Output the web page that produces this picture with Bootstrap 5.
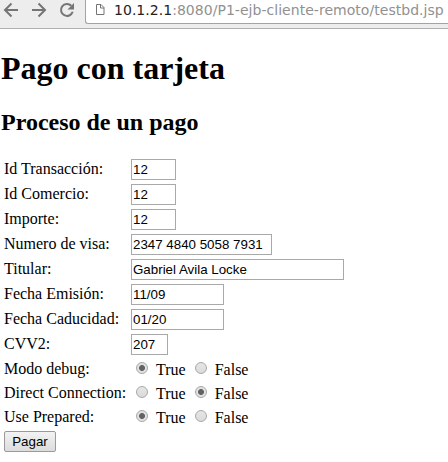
<!DOCTYPE html>
<html lang="es">
<head>
<meta charset="utf-8">
<meta name="viewport" content="width=device-width, initial-scale=1">
<title>Pago con tarjeta</title>
<link href="https://cdn.jsdelivr.net/npm/bootstrap@5.3.0/dist/css/bootstrap.min.css" rel="stylesheet">
<style>
body{font-family:"Liberation Serif",serif;font-size:16px;line-height:18px;color:#000;background:#fff;overflow:hidden}
.toolbar{height:29px;background:#ededed;border-bottom:1px solid #b0b0b0}
.toolbar svg{display:block;flex:none}
.nav-icons{width:85px;height:20px}
.address{height:24px;background:#fff;border:1px solid #a3a3a3;border-width:0 0 1px 1px;border-radius:0 0 0 3px;font:14px/21px "DejaVu Sans",sans-serif;letter-spacing:.035px;color:#919191;padding-left:9px;white-space:nowrap}
.address b{font-weight:400;color:#222}
.title-main{font-size:32px;line-height:36px;font-weight:700;margin:21px 0 0 1px}
.title-sub{font-size:24px;line-height:28px;font-weight:700;margin:22px 0 0 1px}
.pay-form{margin:21px 0 0 4px}
.line{height:25px;padding-top:2px}
.line-radio{height:24px;padding-top:2px}
.caption{width:127px;flex:none;line-height:20px}
.line-radio .caption{line-height:19px}
.box{height:21px;border:1px solid #a9a9a9;border-radius:0;padding:1px 1px;background:#fff;color:#000;font:13.33px/17px "Liberation Sans",sans-serif;outline:0}
.w-a{width:45px}.w-b{width:141px}.w-c{width:213px}.w-d{width:93px}.w-e{width:37px}
.choice{width:58.7px;line-height:21px}
.choice input{appearance:none;width:12px;height:12px;margin:3px 8px 0 5px;border:1px solid #a8a8a8;border-radius:50%;background:linear-gradient(#e6e6e6,#dadada);flex:none}
.choice input:checked{background:radial-gradient(circle at center,#636363 0 2.6px,#e2e2e2 3.3px)}
.pay{width:52px;height:21px;padding:0;border:1px solid #9a9a9a;border-radius:2px;background:linear-gradient(#f3f3f3,#dcdcdc);font:13.33px/19px "Liberation Sans",sans-serif;color:#000;margin-top:2px}
</style>
<script src="https://cdn.jsdelivr.net/npm/bootstrap@5.3.0/dist/js/bootstrap.bundle.min.js"></script>
</head>
<body>
<header class="toolbar d-flex align-items-start">
  <svg class="nav-icons" viewBox="0 0 85 20" fill="none" stroke="#757575" stroke-width="2">
    <path d="M18 10H5.500M11.500 3.500 5 10l6.500 6.500"/>
    <path d="M32 10h12.500M38.500 3.500 45 10l-6.500 6.500"/>
    <path d="M71.300 5.700A6 6 0 1 0 72.700 11.800"/>
    <path d="M74 3v6.500h-6.500z" fill="#757575" stroke="none"/>
  </svg>
  <div class="address d-flex flex-grow-1">
    <svg width="19" height="20" viewBox="0 0 19 20" fill="none" stroke="#757575"><path d="M1.500 4.500h4.500l3 3v7h-7.500zM5.500 4.500v3.500h3.500"/></svg>
    <span><b>10.1.2.1</b>:8080/P1-ejb-cliente-remoto/testbd.jsp</span>
  </div>
</header>
<main>
  <h1 class="title-main">Pago con tarjeta</h1>
  <h2 class="title-sub mb-0">Proceso de un pago</h2>
  <form class="pay-form">
    <div class="line d-flex"><label class="caption" for="tx">Id Transacción:</label><input id="tx" class="box w-a" value="12"></div>
    <div class="line d-flex"><label class="caption" for="co">Id Comercio:</label><input id="co" class="box w-a" value="12"></div>
    <div class="line d-flex"><label class="caption" for="im">Importe:</label><input id="im" class="box w-a" value="12"></div>
    <div class="line d-flex"><label class="caption" for="vi">Numero de visa:</label><input id="vi" class="box w-b" value="2347 4840 5058 7931"></div>
    <div class="line d-flex"><label class="caption" for="ti">Titular:</label><input id="ti" class="box w-c" value="Gabriel Avila Locke"></div>
    <div class="line d-flex"><label class="caption" for="em">Fecha Emisión:</label><input id="em" class="box w-d" value="11/09"></div>
    <div class="line d-flex"><label class="caption" for="ca">Fecha Caducidad:</label><input id="ca" class="box w-d" value="01/20"></div>
    <div class="line d-flex"><label class="caption" for="cv">CVV2:</label><input id="cv" class="box w-e" value="207"></div>
    <div class="line-radio d-flex"><span class="caption">Modo debug:</span><label class="choice d-flex"><input type="radio" name="debug" checked>True</label><label class="choice d-flex"><input type="radio" name="debug">False</label></div>
    <div class="line-radio d-flex"><span class="caption">Direct Connection:</span><label class="choice d-flex"><input type="radio" name="direct">True</label><label class="choice d-flex"><input type="radio" name="direct" checked>False</label></div>
    <div class="line-radio d-flex"><span class="caption">Use Prepared:</span><label class="choice d-flex"><input type="radio" name="prepared" checked>True</label><label class="choice d-flex"><input type="radio" name="prepared">False</label></div>
    <button type="button" class="pay d-block">Pagar</button>
  </form>
</main>
</body>
</html>
